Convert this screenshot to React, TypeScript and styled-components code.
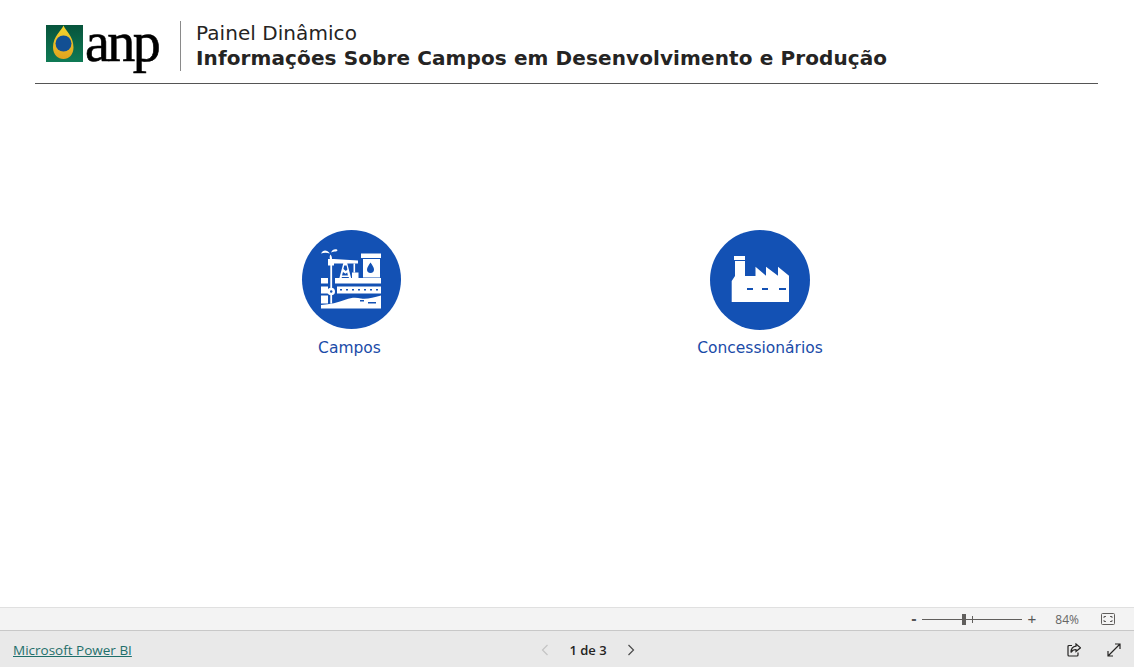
import React from "react";
import styled, { createGlobalStyle } from "styled-components";

const GlobalStyle = createGlobalStyle`
  html, body {
    margin: 0;
    padding: 0;
    background: #fff;
  }
  body {
    font-family: "DejaVu Sans", Verdana, sans-serif;
  }
`;

const Page = styled.div`
  width: 1134px;
  height: 667px;
  display: flex;
  flex-direction: column;
  overflow: hidden;
`;

const Header = styled.header`
  height: 84px;
  flex: none;
  box-sizing: border-box;
  margin: 0 36px 0 35px;
  border-bottom: 1px solid #555;
  display: flex;
  align-items: flex-start;
  padding: 21px 0 0 11px;
`;

const LogoWrap = styled.div`
  width: 115px;
  height: 50px;
  display: flex;
  align-items: flex-start;
  padding-top: 4px;
  box-sizing: border-box;
`;

const AnpText = styled.span`
  font-family: "Liberation Serif", serif;
  font-size: 56px;
  line-height: 34px;
  letter-spacing: -2.6px;
  color: #000;
  margin-left: 2px;
  -webkit-text-stroke: 0.6px #000;
`;

const Divider = styled.div`
  width: 1px;
  height: 50px;
  background: #8a8a8a;
  margin: 0 15px 0 19px;
`;

const Titles = styled.div`
  display: flex;
  flex-direction: column;
`;

const TitleLight = styled.div`
  font-size: 20px;
  line-height: 24px;
  color: #252423;
  letter-spacing: 0.06px;
`;

const TitleBold = styled.div`
  font-size: 20px;
  line-height: 25px;
  margin-top: 1px;
  font-weight: 700;
  color: #252423;
  white-space: nowrap;
  letter-spacing: 0.11px;
`;

const Canvas = styled.main`
  flex: 1;
  display: flex;
  align-items: flex-start;
  padding: 146px 0 0 250px;
`;

const Tile = styled.a<{ $width: number }>`
  width: ${(p) => p.$width}px;
  display: flex;
  flex-direction: column;
  align-items: center;
  gap: 8px;
  color: #1a4ba8;
  text-decoration: none;
`;

const Circle = styled.div<{ $size: number; $shift?: number }>`
  width: ${(p) => p.$size}px;
  height: ${(p) => p.$size}px;
  margin-bottom: ${(p) => 100 - p.$size}px;
  margin-left: ${(p) => p.$shift ?? 0}px;
  border-radius: 50%;
  background: #1351b4;
  display: flex;
  align-items: center;
  justify-content: center;
`;

const TileLabel = styled.span`
  font-size: 15.5px;
  line-height: 20px;
  white-space: nowrap;
`;

const ZoomBar = styled.div`
  height: 23px;
  flex: none;
  box-sizing: border-box;
  background: #f3f3f3;
  border-top: 1px solid #e0e0e0;
  display: flex;
  align-items: center;
  justify-content: flex-end;
  padding-right: 19px;
  color: #605e5c;
`;

const ZoomSign = styled.span<{ $bold?: boolean }>`
  font-size: ${(p) => (p.$bold ? 16 : 15)}px;
  line-height: 14px;
  font-weight: ${(p) => (p.$bold ? 700 : 400)};
  font-family: "Liberation Sans", sans-serif;
  width: 9px;
  text-align: center;
  color: #555;
`;

const ZoomTrack = styled.div`
  position: relative;
  width: 100px;
  height: 1px;
  background: #605e5c;
  margin: 0 5px 0 4px;
`;

const ZoomThumb = styled.div`
  position: absolute;
  left: 40px;
  top: -5px;
  width: 4px;
  height: 11px;
  background: #605e5c;
`;

const ZoomTick = styled.div`
  position: absolute;
  left: 50px;
  top: -3px;
  width: 1px;
  height: 7px;
  background: #605e5c;
`;

const ZoomValue = styled.span`
  font-family: "Open Sans", "Liberation Sans", sans-serif;
  font-size: 12px;
  margin: 0 22px 0 19px;
  color: #666;
`;

const FitIcon = styled.svg`
  display: block;
`;

const Footer = styled.footer`
  height: 37px;
  flex: none;
  box-sizing: border-box;
  background: #e9e9e9;
  border-top: 1px solid #c8c8c8;
  display: grid;
  grid-template-columns: 1fr auto 1fr;
  align-items: center;
  padding: 2px 13px 0;
`;

const BiLink = styled.a`
  font-family: "Open Sans", "Liberation Sans", sans-serif;
  font-size: 13.5px;
  font-weight: 500;
  color: #1f6f6b;
  text-decoration: underline;
  white-space: nowrap;
`;

const Pager = styled.div`
  display: flex;
  align-items: center;
  gap: 19px;
  margin-left: 42px;
`;

const PagerText = styled.span`
  font-family: "Open Sans", "Liberation Sans", sans-serif;
  font-size: 13px;
  font-weight: 600;
  color: #252423;
`;

const FooterIcons = styled.div`
  display: flex;
  justify-content: flex-end;
  align-items: center;
  gap: 26px;
`;

const DropMark = () => (
  <svg width="37" height="37" viewBox="0 0 37 37">
    <defs>
      <linearGradient id="anpGreen" x1="0" y1="0" x2="0" y2="1">
        <stop offset="0" stopColor="#07543c" />
        <stop offset="1" stopColor="#0f7a55" />
      </linearGradient>
      <linearGradient id="anpGold" x1="0" y1="0" x2="0" y2="1">
        <stop offset="0" stopColor="#f5d52e" />
        <stop offset="1" stopColor="#e0a31e" />
      </linearGradient>
    </defs>
    <rect width="37" height="37" fill="url(#anpGreen)" />
    <path
      d="M17.500 0.500C19 5 27.500 11 27.500 22.500C27.500 29.500 23 34 17.500 34C12 34 7 29.500 7 22.500C7 11 16 5 17.500 0.500Z"
      fill="url(#anpGold)"
    />
    <circle cx="17.500" cy="18.500" r="8" fill="#124f93" />
  </svg>
);

const FieldIcon = () => (
  <svg width="66" height="66" viewBox="0 1.500 66 66" fill="#fff">
    {/* spray */}
    <path d="M3 8c2-4 6-4 9 0-3-1-6-1-9 0zM13 7c1-3 4-4 6-3 1 1 0 2-1 2-2 0-3 0-5 1zM12.500 9c1 1 1.500 3 1.500 4.500h-2c-.5-1.500-.5-3 .5-4.500z" />
    {/* beam and horse head */}
    <path d="M10 13.500h6l24 1.500v3H16v2h-6z" />
    <rect x="12.300" y="19" width="1.800" height="24" />
    <rect x="35.500" y="18" width="1.600" height="9" />
    <rect x="34" y="27" width="6.500" height="5.500" />
    {/* derrick */}
    <path
      fillRule="evenodd"
      d="M25.500 17h3.500l4.500 17h-2.200l-.6-2.500h-6.800L23.200 34H21zM26.200 20l-.8 3.500 2.500 2 1.500-1.500-.8-4zM25 26.500l-1 3.500h5.900l-.7-3-1.700 1.300z"
    />
    {/* tank */}
    <rect x="43" y="8" width="20" height="4.500" />
    <path
      fillRule="evenodd"
      d="M45 13.500h17V32H45zM52.500 17c-2 3-3.500 5-3.500 7a3.500 3.500 0 0 0 7 0c0-2-1.500-4-3.500-7z"
    />
    {/* strata */}
    <rect x="17" y="32.500" width="46" height="5.500" />
    <path
      fillRule="evenodd"
      d="M19 41h44v7H19zM22 43.500v1.500h2v-1.500zM28 43.500v1.500h2v-1.500zM34 43.500v1.500h2v-1.500zM40 43.500v1.500h2v-1.500zM46 43.500v1.500h2v-1.500zM52 43.500v1.500h2v-1.500zM58 43.500v1.500h2v-1.500z"
    />
    <rect x="3" y="32.500" width="7" height="5.500" />
    <rect x="3" y="41" width="7" height="7" />
    <rect x="3" y="50" width="7" height="8" />
    <circle cx="13.200" cy="46" r="3.800" />
    <circle cx="13.200" cy="46" r="1.200" fill="#1351b4" />
    <rect x="12.300" y="49" width="1.800" height="9" />
    <path
      fillRule="evenodd"
      d="M3 59.500C12 59 20 57 28 54c5-2 10-2.500 15-1 6 1 12-1 20-3v13H3zM42 54.500v1.500h4v-1.500zM50 56.500v1.500h8v-1.500z"
    />
  </svg>
);

const FactoryIcon = () => (
  <svg width="60" height="50" viewBox="0 0 60 50" fill="#fff">
    <rect x="4" y="1" width="11" height="4" />
    <path
      fillRule="evenodd"
      d="M5 6h10v15h10.500v-9.300L36 20.700v-9L48 20.700v-9l11 9V47H1.700V26L5 21zM17 33v2h6v-2zM32 33v2h6v-2zM49 33v2h7v-2z"
    />
  </svg>
);

export default function App() {
  return (
    <>
      <GlobalStyle />
      <Page>
        <Header>
          <LogoWrap>
            <DropMark />
            <AnpText>anp</AnpText>
          </LogoWrap>
          <Divider />
          <Titles>
            <TitleLight>Painel Dinâmico</TitleLight>
            <TitleBold>Informações Sobre Campos em Desenvolvimento e Produção</TitleBold>
          </Titles>
        </Header>
        <Canvas>
          <Tile $width={199}>
            <Circle $size={99} $shift={3}>
              <FieldIcon />
            </Circle>
            <TileLabel>Campos</TileLabel>
          </Tile>
          <Tile $width={622}>
            <Circle $size={100}>
              <FactoryIcon />
            </Circle>
            <TileLabel>Concessionários</TileLabel>
          </Tile>
        </Canvas>
        <ZoomBar>
          <ZoomSign $bold>-</ZoomSign>
          <ZoomTrack>
            <ZoomThumb />
            <ZoomTick />
          </ZoomTrack>
          <ZoomSign>+</ZoomSign>
          <ZoomValue>84%</ZoomValue>
          <FitIcon width="14" height="12" viewBox="0 0 14 12" fill="none" stroke="#605e5c">
            <rect x="0.500" y="0.500" width="13" height="11" rx="1" />
            <path d="M3 5V3.500h2M9 3.500h2V5M3 7v1.500h2M11 7v1.500H9" />
          </FitIcon>
        </ZoomBar>
        <Footer>
          <BiLink>Microsoft Power BI</BiLink>
          <Pager>
            <svg width="10" height="12" viewBox="0 0 10 12" fill="none" stroke="#c4c4c4" strokeWidth="1.2">
              <path d="M7.500 1 2.500 6l5 5" />
            </svg>
            <PagerText>1 de 3</PagerText>
            <svg width="10" height="12" viewBox="0 0 10 12" fill="none" stroke="#4a4a4a" strokeWidth="1.2">
              <path d="M2.500 1l5 5-5 5" />
            </svg>
          </Pager>
          <FooterIcons>
            <svg width="14" height="14" viewBox="0 0 14 14" fill="none" stroke="#252423" strokeWidth="1.200">
              <path d="M5 2.500H2a1 1 0 0 0-1 1V12a1 1 0 0 0 1 1h8a1 1 0 0 0 1-1V9.500" />
              <path d="M9 1l4.500 3.800L9 8.500V6.500C6.500 6.500 5 7.500 4 9.500 4 6 6 3.500 9 3.200z" />
            </svg>
            <svg width="14" height="14" viewBox="0 0 14 14" fill="none" stroke="#252423" strokeWidth="1.200">
              <path d="M1 13 13 1M8 1h5v5M1 8v5h5" />
            </svg>
          </FooterIcons>
        </Footer>
      </Page>
    </>
  );
}
